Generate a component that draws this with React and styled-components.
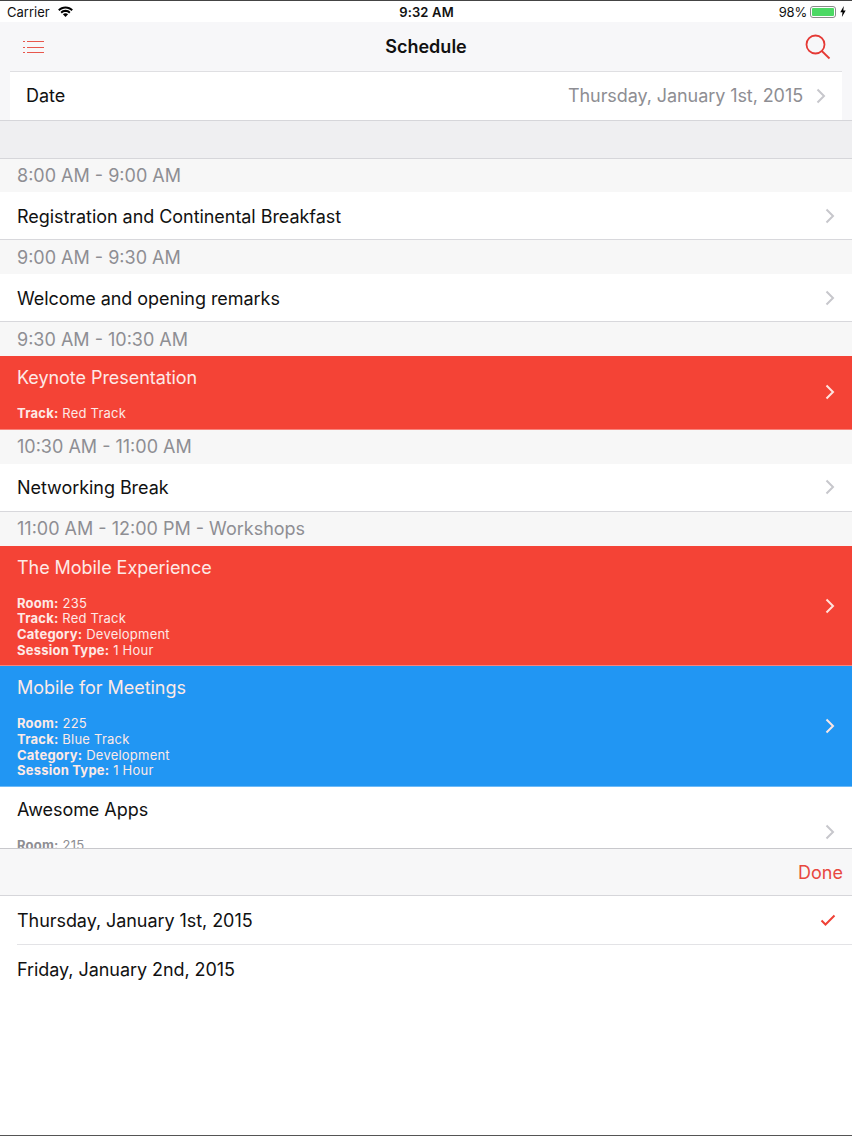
import React from 'react';
import styled, { createGlobalStyle } from 'styled-components';

const GlobalStyle = createGlobalStyle`
  html, body { margin: 0; padding: 0; background: #fff; }
  body { font-family: Inter, "Liberation Sans", sans-serif; }
`;

const sections = [
  { time: '8:00 AM - 9:00 AM', rows: [{ title: 'Registration and Continental Breakfast' }] },
  { time: '9:00 AM - 9:30 AM', rows: [{ title: 'Welcome and opening remarks' }] },
  { time: '9:30 AM - 10:30 AM', rows: [{ title: 'Keynote Presentation', tone: 'red', details: [['Track', 'Red Track']] }] },
  { time: '10:30 AM - 11:00 AM', rows: [{ title: 'Networking Break' }] },
  {
    time: '11:00 AM - 12:00 PM - Workshops',
    rows: [
      {
        title: 'The Mobile Experience',
        tone: 'red',
        details: [['Room', '235'], ['Track', 'Red Track'], ['Category', 'Development'], ['Session Type', '1 Hour']],
      },
      {
        title: 'Mobile for Meetings',
        tone: 'blue',
        details: [['Room', '225'], ['Track', 'Blue Track'], ['Category', 'Development'], ['Session Type', '1 Hour']],
      },
      { title: 'Awesome Apps', details: [['Room', '215'], ['Track', 'Green Track']] },
    ],
  },
];

const tones = { red: '#f44336', blue: '#2196f3' };

function Chevron({ color }) {
  return (
    <ChevronIcon width="10" height="16" viewBox="0 0 10 16" fill="none" stroke={color} strokeWidth="2">
      <path d="M1.5 1.5 L8 8 L1.5 14.5" />
    </ChevronIcon>
  );
}

function SessionRow({ title, tone, details }) {
  return (
    <Row $tone={tone}>
      <RowBody>
        <RowTitle $tone={tone}>{title}</RowTitle>
        {details && (
          <Details>
            {details.map(([label, value]) => (
              <Detail key={label} $tone={tone}>
                <b>{label}:</b> {value}
              </Detail>
            ))}
          </Details>
        )}
      </RowBody>
      <Chevron color={tone ? '#fde4e0' : '#c7c7cc'} />
    </Row>
  );
}

export default function App() {
  return (
    <Page>
      <GlobalStyle />
      <StatusBar>
        <StatusSide>
          Carrier
          <svg width="17" height="12" viewBox="0 0 17 12" fill="#000">
            <path d="M8.5 2.6c2.3 0 4.4.9 6 2.4l1.4-1.5C14 1.600 11.400.4 8.500.4S3 1.600 1.100 3.500L2.500 5c1.600-1.500 3.700-2.400 6-2.400z" />
            <path d="M8.500 6c1.400 0 2.600.5 3.600 1.400l1.400-1.500C12.200 4.600 10.400 3.800 8.500 3.800S4.800 4.600 3.500 5.900l1.400 1.500C5.900 6.500 7.100 6 8.500 6z" />
            <path d="M8.500 7.200c-1 0-1.900.4-2.600 1L8.500 11l2.600-2.800c-.7-.6-1.600-1-2.600-1z" />
          </svg>
        </StatusSide>
        <Clock>9:32 AM</Clock>
        <StatusRight>
          98%
          <Battery>
            <BatteryFill />
          </Battery>
          <svg width="6" height="11" viewBox="0 0 6 11" fill="#000">
            <path d="M3.800 0 L0.300 6.300 H2.500 L1.900 11 L5.700 4.500 H3.300 Z" />
          </svg>
        </StatusRight>
      </StatusBar>

      <NavBar>
        <svg width="22" height="14" viewBox="0 0 22 14" fill="none" stroke="#e8574d" strokeWidth="1">
          <path d="M5 1.500 H22 M5 7.500 H22 M5 12.500 H22" />
          <path d="M1 1.500 H3 M1 7.500 H3 M1 12.500 H3" />
        </svg>
        <NavTitle>Schedule</NavTitle>
        <svg width="26" height="26" viewBox="0 0 26 26" fill="none" stroke="#e53935" strokeWidth="1.800">
          <circle cx="10.500" cy="10.500" r="9" />
          <path d="M16.800 17 L24.500 24.500" />
        </svg>
      </NavBar>

      <DateBar>
        <DateCard>
          <DateLabel>Date</DateLabel>
          <DateValue>Thursday, January 1st, 2015</DateValue>
          <Chevron color="#c7c7cc" />
        </DateCard>
      </DateBar>

      <Band />

      <List>
        {sections.map((section) => (
          <React.Fragment key={section.time}>
            <SectionHeader>{section.time}</SectionHeader>
            {section.rows.map((row) => (
              <SessionRow key={row.title} {...row} />
            ))}
          </React.Fragment>
        ))}
      </List>

      <PickerBar>
        <DoneButton>Done</DoneButton>
      </PickerBar>
      <Picker>
        <PickerRow>
          Thursday, January 1st, 2015
          <svg width="16" height="12" viewBox="0 0 16 12" fill="none" stroke="#ef4136" strokeWidth="2">
            <path d="M1.500 6.500 L5.500 10.500 L14.500 1.500" />
          </svg>
        </PickerRow>
        <PickerRow>Friday, January 2nd, 2015</PickerRow>
      </Picker>
    </Page>
  );
}

const Page = styled.div`
  width: 852px;
  height: 1136px;
  display: flex;
  flex-direction: column;
  overflow: hidden;
  background: #fff;
  border-top: 1px solid #444;
  border-bottom: 1px solid #555;
  box-sizing: border-box;
`;

const StatusBar = styled.div`
  height: 21px;
  flex: none;
  display: grid;
  grid-template-columns: 1fr auto 1fr;
  align-items: center;
  padding: 0 6px 0 7px;
  font-size: 13px;
  color: #111;
`;

const StatusSide = styled.div`
  display: flex;
  align-items: center;
  gap: 7px;
`;

const Clock = styled.div`
  font-weight: 600;
  letter-spacing: 0.15px;
`;

const StatusRight = styled(StatusSide)`
  justify-content: flex-end;
  gap: 3px;
  letter-spacing: -0.2px;
`;

const Battery = styled.div`
  width: 26px;
  height: 12px;
  padding: 1px;
  box-sizing: border-box;
  border: 1px solid #8a8a8a;
  border-radius: 3px;
  margin-right: 1px;
`;

const BatteryFill = styled.div`
  height: 100%;
  background: #4cd964;
  border-radius: 1px;
`;

const NavBar = styled.div`
  height: 49px;
  flex: none;
  display: flex;
  align-items: center;
  justify-content: space-between;
  position: relative;
  padding: 0 21px 0 22px;
  background: #f7f7f9;
`;

const NavTitle = styled.div`
  position: absolute;
  left: 0;
  right: 0;
  text-align: center;
  font-size: 18px;
  font-weight: 600;
  color: #111;
`;

const DateBar = styled.div`
  flex: none;
  padding: 0 10px;
  background: #f7f7f9;
`;

const DateCard = styled.div`
  height: 49px;
  display: flex;
  align-items: center;
  padding: 0 16px 1px;
  background: #fff;
  border-top: 1px solid #dfdfe2;
  box-sizing: border-box;
`;

const DateLabel = styled.div`
  flex: 1;
  font-size: 18px;
  color: #111;
`;

const DateValue = styled.div`
  font-size: 18px;
  letter-spacing: -0.08px;
  color: #8e8e93;
  margin-right: 13px;
`;

const Band = styled.div`
  height: 39px;
  flex: none;
  background: #efeff1;
  border-top: 1px solid #d6d6da;
  border-bottom: 1px solid #d6d6da;
  box-sizing: border-box;
`;

const List = styled.div`
  height: 689px;
  flex: none;
  overflow: hidden;
`;

const SectionHeader = styled.div`
  height: 34px;
  display: flex;
  align-items: center;
  padding-left: 17px;
  background: #f7f7f7;
  font-size: 18px;
  color: #8e8e93;

  &:first-child {
    height: 33px;
  }
`;

const Row = styled.div`
  display: flex;
  align-items: center;
  justify-content: space-between;
  padding: 0 17px;
  box-sizing: border-box;
  background: ${(p) => tones[p.$tone] || '#fff'};
  border-bottom: 1px solid ${(p) => (p.$tone ? 'rgba(255,255,255,.35)' : '#d8d8dc')};
  min-height: 48px;
`;

const RowBody = styled.div`
  flex: 1;
`;

const RowTitle = styled.div`
  font-size: 18px;
  line-height: 22px;
  padding: ${(p) => (p.$tone ? '11px' : '12px')} 0 10px;
  letter-spacing: -0.05px;
  color: ${(p) => (p.$tone ? '#fde9e6' : '#111')};
`;

const Details = styled.div`
  margin-top: 7px;
  padding-bottom: 7.200px;
`;

const Detail = styled.div`
  font-size: 13px;
  line-height: 15.600px;
  letter-spacing: 0.22px;
  color: ${(p) => (p.$tone ? '#fde9e6' : '#8e8e93')};
`;

const ChevronIcon = styled.svg`
  flex: none;
`;

const PickerBar = styled.div`
  height: 48px;
  flex: none;
  display: flex;
  align-items: center;
  justify-content: flex-end;
  padding-right: 9px;
  background: #f7f7f8;
  border-top: 1px solid #c8c8cc;
  border-bottom: 1px solid #d6d6da;
  box-sizing: border-box;
`;

const DoneButton = styled.div`
  font-size: 18px;
  color: #e8483f;
`;

const Picker = styled.div`
  flex: 1;
  padding-left: 17px;
`;

const PickerRow = styled.div`
  height: 49px;
  display: flex;
  align-items: center;
  justify-content: space-between;
  padding-right: 16px;
  box-sizing: border-box;
  font-size: 18px;
  letter-spacing: -0.06px;
  color: #111;
  border-bottom: 1px solid #e3e3e6;

  &:last-child {
    border-bottom: 0;
  }
`;
